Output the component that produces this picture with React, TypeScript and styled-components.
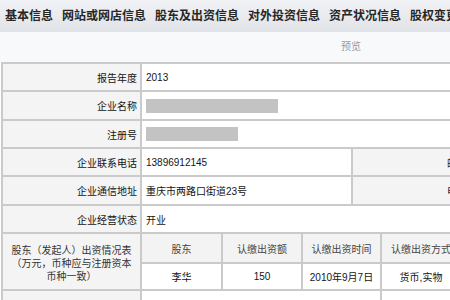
import styled, { createGlobalStyle } from "styled-components";

const GlobalStyle = createGlobalStyle`
  html, body {
    margin: 0;
    padding: 0;
    background: #fff;
    overflow: hidden;
  }
  body {
    font-family: "Liberation Sans", "Noto Sans CJK SC", sans-serif;
    color: #222;
  }
`;

const Page = styled.div`
  width: 702px;
`;

const TabBar = styled.div`
  height: 32px;
  display: flex;
  align-items: center;
  gap: 9px;
  padding-left: 5px;
  background: linear-gradient(#f1f2f5, #e0e3e7);
`;

const Tab = styled.div`
  font-size: 12px;
  font-weight: bold;
  color: #262626;
  white-space: nowrap;
  line-height: 32px;
`;

const PreviewBar = styled.div`
  height: 30px;
  line-height: 30px;
  text-align: center;
  font-size: 10px;
  color: #9a9a9a;
  background: #f8f9fb;
`;

const Sheet = styled.div`
  margin-left: 1px;
  padding: 2px;
  background: #cacaca;
  display: flex;
  flex-direction: column;
  gap: 2px;
`;

const Row = styled.div<{ $cols: string; $h: number }>`
  display: grid;
  grid-template-columns: ${(p) => p.$cols};
  gap: 2px;
  min-height: ${(p) => p.$h}px;
`;

const Label = styled.div`
  background: #f4f4f4;
  font-size: 10px;
  color: #151515;
  display: flex;
  align-items: center;
  justify-content: flex-end;
  padding-right: 3px;
  white-space: nowrap;
  overflow: hidden;
`;

const Value = styled.div`
  background: #fff;
  font-size: 10px;
  color: #151515;
  display: flex;
  align-items: center;
  padding-left: 4px;
  white-space: nowrap;
  overflow: hidden;
`;

const Redacted = styled.span<{ $w: number }>`
  display: block;
  width: ${(p) => p.$w}px;
  height: 14px;
  background: #c3c3c3;
`;

const GroupLabel = styled.div`
  background: #f4f4f4;
  font-size: 10px;
  line-height: 13px;
  color: #333;
  text-align: center;
  padding-top: 10px;
`;

const Inner = styled.div`
  display: grid;
  grid-template-columns: 79px 78px 77px 78px 78px 1fr;
  grid-template-rows: 28px 25px;
  gap: 2px;
  background: #cacaca;
`;

const Cell = styled.div<{ $head?: boolean }>`
  background: ${(p) => (p.$head ? "#f3f3f3" : "#fff")};
  color: ${(p) => (p.$head ? "#444" : "#151515")};
  font-size: 10px;
  display: flex;
  align-items: center;
  justify-content: center;
  white-space: nowrap;
  overflow: hidden;
`;

const tabs = ["基本信息", "网站或网店信息", "股东及出资信息", "对外投资信息", "资产状况信息", "股权变更信息"];
const heads = ["股东", "认缴出资额", "认缴出资时间", "认缴出资方式", "实缴出资额", "实缴出资时间"];
const holder = ["李华", "150", "2010年9月7日", "货币,实物", "150", "2010年9月7日"];

export default function App() {
  return (
    <Page>
      <GlobalStyle />
      <TabBar>
        {tabs.map((t) => (
          <Tab key={t}>{t}</Tab>
        ))}
      </TabBar>
      <PreviewBar>预览</PreviewBar>
      <Sheet>
        <Row $cols="137px 1fr" $h={26}>
          <Label>报告年度</Label>
          <Value>2013</Value>
        </Row>
        <Row $cols="137px 1fr" $h={27}>
          <Label>企业名称</Label>
          <Value>
            <Redacted $w={132} />
          </Value>
        </Row>
        <Row $cols="137px 1fr" $h={26}>
          <Label>注册号</Label>
          <Value>
            <Redacted $w={92} />
          </Value>
        </Row>
        <Row $cols="137px 209px 137px 1fr" $h={26}>
          <Label>企业联系电话</Label>
          <Value>13896912145</Value>
          <Label>邮政编码</Label>
          <Value>400000</Value>
        </Row>
        <Row $cols="137px 209px 137px 1fr" $h={27}>
          <Label>企业通信地址</Label>
          <Value>重庆市两路口街道23号</Value>
          <Label>电子邮箱</Label>
          <Value></Value>
        </Row>
        <Row $cols="137px 1fr" $h={26}>
          <Label>企业经营状态</Label>
          <Value>开业</Value>
        </Row>
        <Row $cols="137px 1fr" $h={55}>
          <GroupLabel>
            股东（发起人）出资情况表
            <br />
            （万元，币种应与注册资本
            <br />
            币种一致）
          </GroupLabel>
          <Inner>
            {heads.map((h) => (
              <Cell key={h} $head>
                {h}
              </Cell>
            ))}
            {holder.map((v, i) => (
              <Cell key={i}>{v}</Cell>
            ))}
          </Inner>
        </Row>
        <Row $cols="137px 238px 1fr" $h={26}>
          <Label></Label>
          <Value></Value>
          <Value></Value>
        </Row>
      </Sheet>
    </Page>
  );
}
